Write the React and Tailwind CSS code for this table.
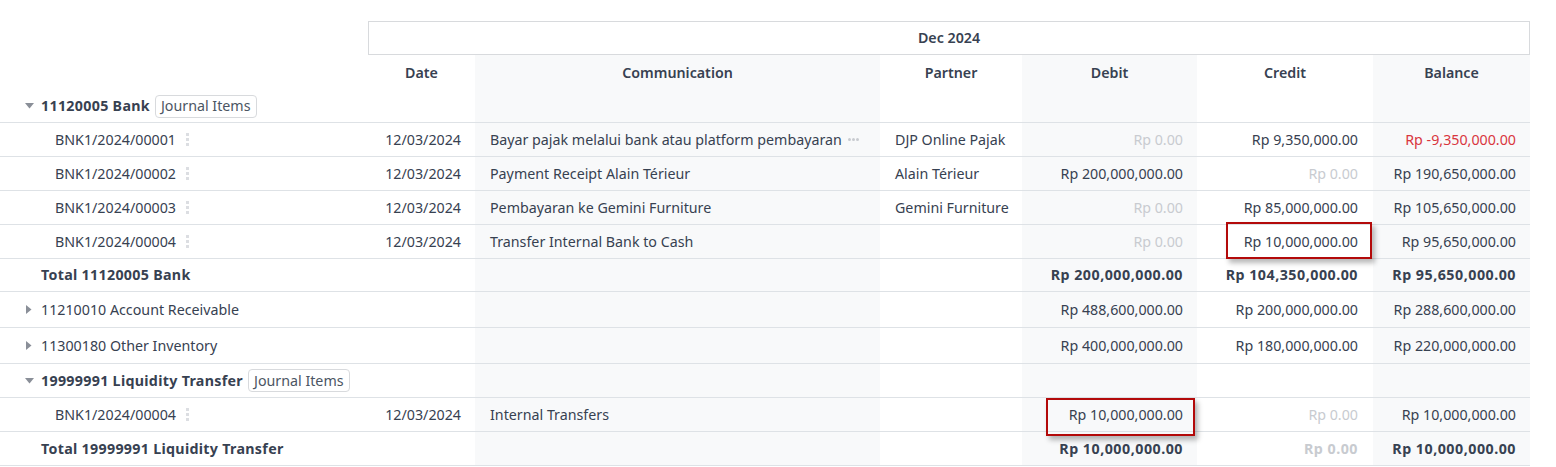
const COLS = "grid grid-cols-[368px_107px_405px_142px_175px_176px_157px]";
const GRAY = "bg-[#f8f9fa]";

function CaretDown() {
  return (
    <span className="flex w-[9px] shrink-0">
      <svg width="9" height="6" viewBox="0 0 9 6">
        <polygon points="0,0 9,0 4.5,5.5" fill="#8a8f98" />
      </svg>
    </span>
  );
}

function CaretRight() {
  return (
    <span className="flex w-[9px] shrink-0 pl-[1px]">
      <svg width="6" height="9" viewBox="0 0 6 9">
        <polygon points="0,0 5.5,4.5 0,9" fill="#8a8f98" />
      </svg>
    </span>
  );
}

function Kebab() {
  return (
    <span className="ml-[10px] flex flex-col gap-[2px]">
      <span className="block w-[3px] h-[3px] bg-[#dcdee2]" />
      <span className="block w-[3px] h-[3px] bg-[#dcdee2]" />
      <span className="block w-[3px] h-[3px] bg-[#dcdee2]" />
    </span>
  );
}

function Badge() {
  return (
    <span className="ml-[5px] inline-flex items-center h-[23px] px-[5px] border border-[#d8dadd] rounded-[4px] font-normal tracking-normal text-[#4b5563]">
      Journal Items
    </span>
  );
}

function Mark({ className }) {
  return (
    <div
      className={
        "absolute z-10 border-2 border-[#b30a0a] shadow-[3px_4px_5px_rgba(0,0,0,0.28)] pointer-events-none " +
        className
      }
    />
  );
}

function Amount({ v, muted, red, bold }) {
  let color = "text-[#374151]";
  if (muted) color = "text-[#c8cbd0]";
  if (red) color = "text-[#d9363e]";
  return <span className={color + (bold ? " font-bold tracking-[0.5px]" : "")}>{v}</span>;
}

function Row({ h, cells, label, mark }) {
  return (
    <div className={COLS + " border-b border-[#dee2e6] " + h}>
      <div className="flex items-center min-w-0">{label}</div>
      <div className="flex items-center justify-end pr-[14px]">{cells[0]}</div>
      <div className={"flex items-center pl-[15px] " + GRAY}>{cells[1]}</div>
      <div className="flex items-center pl-[15px]">{cells[2]}</div>
      <div className={"relative flex items-center justify-end pr-[14px] " + GRAY}>
        {cells[3]}
        {mark === "debit" && <Mark className="left-[24px] top-[0px] w-[149px] h-[38px]" />}
      </div>
      <div className="relative flex items-center justify-end pr-[15px]">
        {cells[4]}
        {mark === "credit" && <Mark className="left-[29px] top-[-3px] w-[146px] h-[37px]" />}
      </div>
      <div className={"flex items-center justify-end pr-[14px] " + GRAY}>{cells[5]}</div>
    </div>
  );
}

function EntryLabel({ name }) {
  return (
    <div className="flex items-center pl-[55px]">
      <span>{name}</span>
      <Kebab />
    </div>
  );
}

function GroupLabel({ name, open, badge }) {
  return (
    <div className="flex items-center pl-[25px]">
      {open ? <CaretDown /> : <CaretRight />}
      <span className={"ml-[7px] " + (open ? "font-bold tracking-[0.3px]" : "")}>{name}</span>
      {badge && <Badge />}
    </div>
  );
}

function TotalLabel({ name }) {
  return <div className="pl-[41px] font-bold tracking-[0.3px]">{name}</div>;
}

export default function App() {
  const empty = ["", "", "", "", "", ""];
  return (
    <div
      className="w-[1556px] h-[467px] bg-white pt-[21px] text-[14.25px] text-[#374151] overflow-hidden"
      style={{ fontFamily: '"Segoe UI", "Noto Sans", "Open Sans", sans-serif' }}
    >
      <div className="w-[1530px]">
        <div className={COLS + " h-[34px]"}>
          <div />
          <div className="col-span-6 flex items-center justify-center border border-[#d8dadd] font-semibold">
            Dec 2024
          </div>
        </div>
        <div className={COLS + " h-[35px] font-semibold"}>
          <div />
          <div className="flex items-center justify-center">Date</div>
          <div className={"flex items-center justify-center " + GRAY}>Communication</div>
          <div className="flex items-center justify-center">Partner</div>
          <div className={"flex items-center justify-center " + GRAY}>Debit</div>
          <div className="flex items-center justify-center">Credit</div>
          <div className={"flex items-center justify-center " + GRAY}>Balance</div>
        </div>

        <Row h="h-[33px]" label={<GroupLabel name="11120005 Bank" open badge />} cells={empty} />
        <Row
          h="h-[34px]"
          label={<EntryLabel name="BNK1/2024/00001" />}
          cells={[
            "12/03/2024",
            <span className="flex items-center">
              Bayar pajak melalui bank atau platform pembayaran
              <span className="ml-[6px] flex gap-[1px]">
                <span className="block w-[3px] h-[3px] rounded-full bg-[#c8cbd0]" />
                <span className="block w-[3px] h-[3px] rounded-full bg-[#c8cbd0]" />
                <span className="block w-[3px] h-[3px] rounded-full bg-[#c8cbd0]" />
              </span>
            </span>,
            "DJP Online Pajak",
            <Amount v="Rp 0.00" muted />,
            <Amount v="Rp 9,350,000.00" />,
            <Amount v="Rp -9,350,000.00" red />,
          ]}
        />
        <Row
          h="h-[34px]"
          label={<EntryLabel name="BNK1/2024/00002" />}
          cells={[
            "12/03/2024",
            "Payment Receipt Alain Térieur",
            "Alain Térieur",
            <Amount v="Rp 200,000,000.00" />,
            <Amount v="Rp 0.00" muted />,
            <Amount v="Rp 190,650,000.00" />,
          ]}
        />
        <Row
          h="h-[34px]"
          label={<EntryLabel name="BNK1/2024/00003" />}
          cells={[
            "12/03/2024",
            "Pembayaran ke Gemini Furniture",
            "Gemini Furniture",
            <Amount v="Rp 0.00" muted />,
            <Amount v="Rp 85,000,000.00" />,
            <Amount v="Rp 105,650,000.00" />,
          ]}
        />
        <Row
          h="h-[34px]"
          mark="credit"
          label={<EntryLabel name="BNK1/2024/00004" />}
          cells={[
            "12/03/2024",
            "Transfer Internal Bank to Cash",
            "",
            <Amount v="Rp 0.00" muted />,
            <Amount v="Rp 10,000,000.00" />,
            <Amount v="Rp 95,650,000.00" />,
          ]}
        />
        <Row
          h="h-[33px]"
          label={<TotalLabel name="Total 11120005 Bank" />}
          cells={[
            "",
            "",
            "",
            <Amount v="Rp 200,000,000.00" bold />,
            <Amount v="Rp 104,350,000.00" bold />,
            <Amount v="Rp 95,650,000.00" bold />,
          ]}
        />
        <Row
          h="h-[36px]"
          label={<GroupLabel name="11210010 Account Receivable" />}
          cells={[
            "",
            "",
            "",
            <Amount v="Rp 488,600,000.00" />,
            <Amount v="Rp 200,000,000.00" />,
            <Amount v="Rp 288,600,000.00" />,
          ]}
        />
        <Row
          h="h-[36px]"
          label={<GroupLabel name="11300180 Other Inventory" />}
          cells={[
            "",
            "",
            "",
            <Amount v="Rp 400,000,000.00" />,
            <Amount v="Rp 180,000,000.00" />,
            <Amount v="Rp 220,000,000.00" />,
          ]}
        />
        <Row h="h-[34px]" label={<GroupLabel name="19999991 Liquidity Transfer" open badge />} cells={empty} />
        <Row
          h="h-[34px]"
          mark="debit"
          label={<EntryLabel name="BNK1/2024/00004" />}
          cells={[
            "12/03/2024",
            "Internal Transfers",
            "",
            <Amount v="Rp 10,000,000.00" />,
            <Amount v="Rp 0.00" muted />,
            <Amount v="Rp 10,000,000.00" />,
          ]}
        />
        <Row
          h="h-[34px]"
          label={<TotalLabel name="Total 19999991 Liquidity Transfer" />}
          cells={[
            "",
            "",
            "",
            <Amount v="Rp 10,000,000.00" bold />,
            <Amount v="Rp 0.00" muted bold />,
            <Amount v="Rp 10,000,000.00" bold />,
          ]}
        />
      </div>
    </div>
  );
}
